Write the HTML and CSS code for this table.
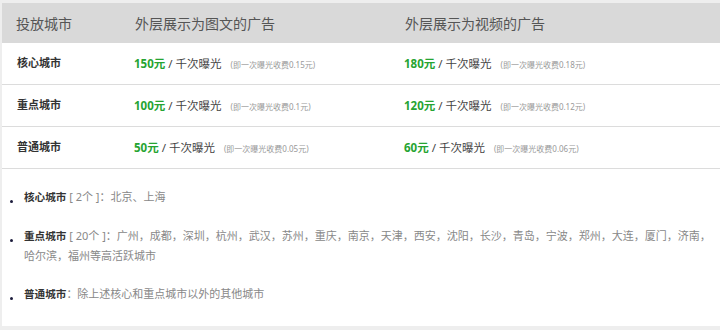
FILE: index.html
```html
<!DOCTYPE html>
<html lang="zh">
<head>
<meta charset="utf-8">
<link rel="stylesheet" href="styles.css">
</head>
<body>
<div class="panel">
  <div class="table">
    <div class="row head">
      <div class="cell c1">投放城市</div>
      <div class="cell c2">外层展示为图文的广告</div>
      <div class="cell c3">外层展示为视频的广告</div>
    </div>
    <div class="row">
      <div class="cell c1 label">核心城市</div>
      <div class="cell c2"><span class="price">150元</span><span class="unit"> / 千次曝光</span><span class="note">(即一次曝光收费0.15元)</span></div>
      <div class="cell c3"><span class="price">180元</span><span class="unit"> / 千次曝光</span><span class="note">(即一次曝光收费0.18元)</span></div>
    </div>
    <div class="row">
      <div class="cell c1 label">重点城市</div>
      <div class="cell c2"><span class="price">100元</span><span class="unit"> / 千次曝光</span><span class="note">(即一次曝光收费0.1元)</span></div>
      <div class="cell c3"><span class="price">120元</span><span class="unit"> / 千次曝光</span><span class="note">(即一次曝光收费0.12元)</span></div>
    </div>
    <div class="row">
      <div class="cell c1 label">普通城市</div>
      <div class="cell c2"><span class="price">50元</span><span class="unit"> / 千次曝光</span><span class="note">(即一次曝光收费0.05元)</span></div>
      <div class="cell c3"><span class="price">60元</span><span class="unit"> / 千次曝光</span><span class="note">(即一次曝光收费0.06元)</span></div>
    </div>
  </div>
  <ul class="list">
    <li><b>核心城市</b> [ 2个 ]：北京、上海</li>
    <li><b>重点城市</b> [ 20个 ]：广州，成都，深圳，杭州，武汉，苏州，重庆，南京，天津，西安，沈阳，长沙，青岛，宁波，郑州，大连，厦门，济南，<span class="nw">哈尔滨，</span>福州等高活跃城市</li>
    <li><b>普通城市</b>：除上述核心和重点城市以外的其他城市</li>
  </ul>
</div>
</body>
</html>
```
FILE: styles.css
```css
html, body {
  margin: 0;
  padding: 0;
}
body {
  background: #eeeeee;
  font-family: "Noto Sans", "Noto Sans CJK SC", sans-serif;
  width: 720px;
  height: 330px;
  overflow: hidden;
}
.panel {
  margin: 3px 0 0 2px;
  background: #ffffff;
  height: 323px;
}
.row {
  display: grid;
  grid-template-columns: 132px 270px 1fr;
  box-sizing: border-box;
  height: 42px;
  padding-bottom: 4px;
  align-items: center;
  border-bottom: 1px solid #dcdcdc;
}
.row.head {
  height: 40px;
  padding-bottom: 0;
  background: #d9d9d9;
  border-bottom: 0;
  font-size: 14px;
  color: #555555;
}
.cell.c1 {
  padding-left: 14px;
}
.head .c2, .head .c3 {
  padding-left: 1px;
}
.label {
  font-size: 11px;
  font-weight: bold;
  color: #333333;
  padding-left: 15px !important;
}
.price {
  color: #26a432;
  font-weight: bold;
  font-size: 11.5px;
}
.unit {
  color: #444444;
  font-size: 11.5px;
}
.note {
  color: #999999;
  font-size: 8px;
  margin-left: 9px;
}
.list {
  list-style: none;
  margin: 0;
  padding: 18px 4px 0 22px;
  font-size: 11px;
  line-height: 19px;
  color: #888888;
}
.list li {
  position: relative;
  margin-bottom: 19px;
}
.list li::before {
  content: "";
  position: absolute;
  left: -14px;
  top: 13px;
  width: 3px;
  height: 3px;
  border-radius: 50%;
  background: #1c1c3c;
}
.list b {
  color: #333333;
  font-weight: bold;
  font-size: 10.6px;
}
.nw {
  white-space: nowrap;
}
```
